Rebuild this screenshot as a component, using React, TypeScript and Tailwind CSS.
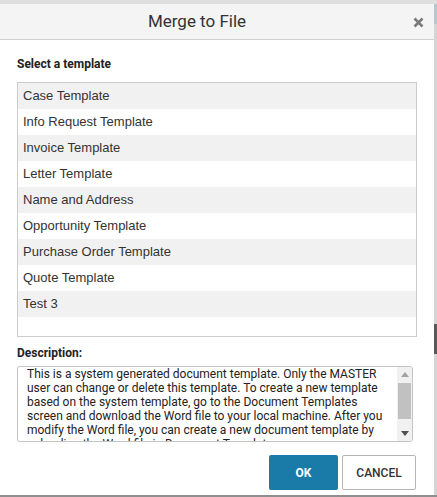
import React from "react";

const templates = [
  "Case Template",
  "Info Request Template",
  "Invoice Template",
  "Letter Template",
  "Name and Address",
  "Opportunity Template",
  "Purchase Order Template",
  "Quote Template",
  "Test 3",
];

const descLines = [
  "This is a system generated document template. Only the MASTER",
  "user can change or delete this template. To create a new template",
  "based on the system template, go to the Document Templates",
  "screen and download the Word file to your local machine. After you",
  "modify the Word file, you can create a new document template by",
  "uploading the Word file in Document Templates.",
];

export default function App() {
  return (
    <div className="w-[437px] h-[497px] bg-[#dedede] flex flex-col overflow-hidden">
      <div className="h-[4px] shrink-0 bg-[#dedede]" />
      <div className="flex flex-1 min-h-0">
        <div className="w-[434px] h-full bg-white flex flex-col">
          {/* header */}
          <div className="h-[36px] shrink-0 bg-[#f4f4f4] border-b border-[#cfcfcf] flex items-center relative">
            <div className="flex-1 pr-[40px] text-center text-[17px] text-[#333] font-['Roboto',sans-serif] leading-none">
              Merge to File
            </div>
            <div className="absolute right-[10px] top-[13px]">
              <svg width="11" height="11" viewBox="0 0 11 11">
                <path d="M1.5 1.5 L9.5 9.5 M9.5 1.5 L1.5 9.5" stroke="#7a7a7a" strokeWidth="2.6" strokeLinecap="butt" />
              </svg>
            </div>
          </div>
          {/* body */}
          <div className="px-[17px] pt-[17px] flex flex-col font-['Roboto',sans-serif]">
            <div className="text-[12px] font-bold text-[#222] leading-[14px]">Select a template</div>
            <div className="mt-[11px] w-[400px] h-[255px] border border-[#cccccc] flex flex-col">
              {templates.map((t, i) => (
                <div
                  key={t}
                  className={`h-[26px] shrink-0 flex items-center pl-[5px] text-[13px] text-[#333] font-['Liberation_Sans',Arial,sans-serif] ${
                    i % 2 === 0 ? "bg-[#f1f1f1]" : "bg-white"
                  }`}
                >
                  {t}
                </div>
              ))}
            </div>
            <div className="mt-[9px] text-[12px] font-bold text-[#222] leading-[14px]">Description:</div>
            <div className="mt-[6px] w-[396px] h-[76px] border border-[#c4c4c4] rounded-[3px] flex overflow-hidden">
              <div className="flex-1 pl-[9px] pt-[0px] overflow-hidden text-[12px] leading-[14px] text-[#222]">
                {descLines.map((l) => (
                  <div key={l} className="whitespace-nowrap">
                    {l}
                  </div>
                ))}
              </div>
              <div className="w-[15px] shrink-0 bg-[#f1f1f1] flex flex-col items-center">
                <div className="h-[15px] flex items-center justify-center">
                  <svg width="8" height="5" viewBox="0 0 8 5">
                    <path d="M0 5 L4 0 L8 5 Z" fill="#a3a3a3" />
                  </svg>
                </div>
                <div className="w-[13px] h-[36px] bg-[#c1c1c1] mt-[1px]" />
                <div className="flex-1" />
                <div className="h-[15px] flex items-center justify-center">
                  <svg width="8" height="5" viewBox="0 0 8 5">
                    <path d="M0 0 L8 0 L4 5 Z" fill="#505050" />
                  </svg>
                </div>
              </div>
            </div>
            <div className="mt-[13px] flex justify-end gap-[4px] pr-[1px]">
              <button className="w-[69px] h-[35px] bg-[#1a7aa8] text-white text-[12px] font-bold rounded-[2px]">
                OK
              </button>
              <button className="w-[74px] h-[35px] bg-white border border-[#b5b5b5] text-[#333] text-[12px] font-medium rounded-[2px]">
                CANCEL
              </button>
            </div>
          </div>
        </div>
        <div className="w-[3px] h-full flex flex-col">
          <div className="h-[20px] bg-[#b7c8cd]" />
          <div className="h-[300px] bg-[#d5d5d5]" />
          <div className="h-[30px] bg-[#5a5a5a]" />
          <div className="flex-1 bg-[#d5d5d5]" />
        </div>
      </div>
      <div className="h-[2px] shrink-0 bg-[#8f8f8f]" />
    </div>
  );
}
